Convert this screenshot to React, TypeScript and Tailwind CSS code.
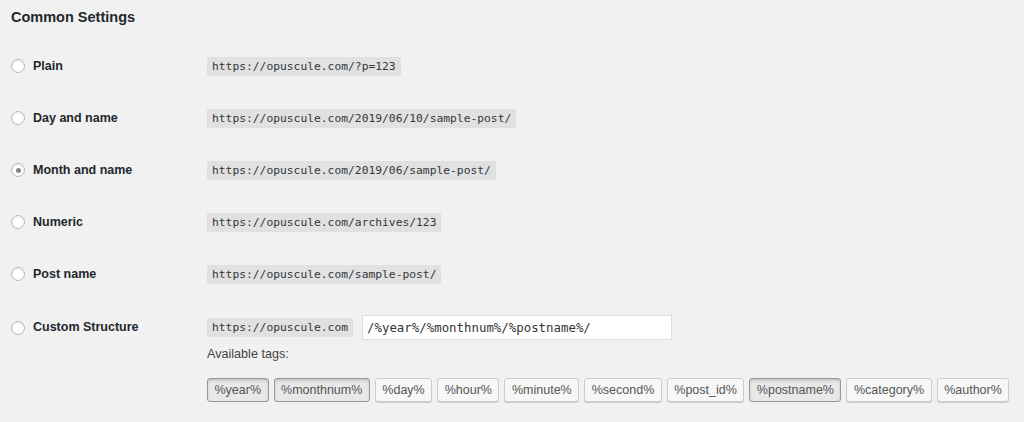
import React from 'react'

const rows = [
  { label: 'Plain', url: 'https://opuscule.com/?p=123' },
  { label: 'Day and name', url: 'https://opuscule.com/2019/06/10/sample-post/' },
  { label: 'Month and name', url: 'https://opuscule.com/2019/06/sample-post/', checked: true },
  { label: 'Numeric', url: 'https://opuscule.com/archives/123' },
  { label: 'Post name', url: 'https://opuscule.com/sample-post/' },
]

const tags = [
  { name: '%year%', active: true },
  { name: '%monthnum%', active: true },
  { name: '%day%' },
  { name: '%hour%' },
  { name: '%minute%' },
  { name: '%second%' },
  { name: '%post_id%' },
  { name: '%postname%', active: true },
  { name: '%category%' },
  { name: '%author%' },
]

const sans = "font-['Liberation_Sans',Arial,sans-serif]"
const mono = "font-['DejaVu_Sans_Mono',monospace]"

function Radio({ checked }: { checked?: boolean }) {
  return (
    <span className="w-[14px] h-[14px] rounded-full border border-[#b4b9be] bg-white shadow-[inset_0_1px_2px_rgba(0,0,0,0.1)] flex items-center justify-center shrink-0">
      {checked && <span className="w-[5px] h-[5px] rounded-full bg-[#7e8993]" />}
    </span>
  )
}

function Code({ children }: { children: React.ReactNode }) {
  return (
    <code className={`${mono} text-[11.3px] leading-[19px] h-[19px] px-[5px] bg-[#e1e1e1] text-[#32373c] whitespace-nowrap`}>
      {children}
    </code>
  )
}

export default function App() {
  return (
    <div className={`${sans} w-[1024px] h-[422px] bg-[#f1f1f1] pl-[11px] text-[#23282d] overflow-hidden`}>
      <div className="h-[40px] pt-[8px]">
        <h2 className="text-[14.5px] leading-[18px] font-bold">Common Settings</h2>
      </div>

      {rows.map((r) => (
        <div key={r.label} className="h-[52px] flex items-center">
          <label className="w-[196px] flex items-center gap-[8px] shrink-0">
            <Radio checked={r.checked} />
            <span className="text-[12.5px] font-bold">{r.label}</span>
          </label>
          <Code>{r.url}</Code>
        </div>
      ))}

      <div className="flex pt-[15px]">
        <label className="w-[196px] h-[25px] flex items-center gap-[8px] shrink-0">
          <Radio />
          <span className="text-[12.5px] font-bold">Custom Structure</span>
        </label>
        <div className="flex flex-col">
          <div className="flex items-center gap-[9px] h-[25px]">
            <Code>https://opuscule.com</Code>
            <div className={`${mono} w-[310px] h-[25px] bg-white border border-[#dddddd] pl-[4px] text-[12.4px] leading-[23px] text-[#32373c]`}>
              /%year%/%monthnum%/%postname%/
            </div>
          </div>
          <p className="text-[12.6px] leading-[18px] mt-[5px] text-[#444]">Available tags:</p>
          <div className="flex gap-[5px] mt-[15px]">
            {tags.map((t) =>
              t.active ? (
                <button
                  key={t.name}
                  className="h-[24px] px-[6.5px] text-[12.5px] text-[#555] rounded-[3px] border border-[#999] bg-[#e8e8e8] shadow-[inset_0_2px_5px_-3px_rgba(0,0,0,0.5)]"
                >
                  {t.name}
                </button>
              ) : (
                <button
                  key={t.name}
                  className="h-[24px] px-[6.5px] text-[12.5px] text-[#555] rounded-[3px] border border-[#cccccc] bg-[#f7f7f7] shadow-[0_1px_0_#cccccc]"
                >
                  {t.name}
                </button>
              )
            )}
          </div>
        </div>
      </div>
    </div>
  )
}
